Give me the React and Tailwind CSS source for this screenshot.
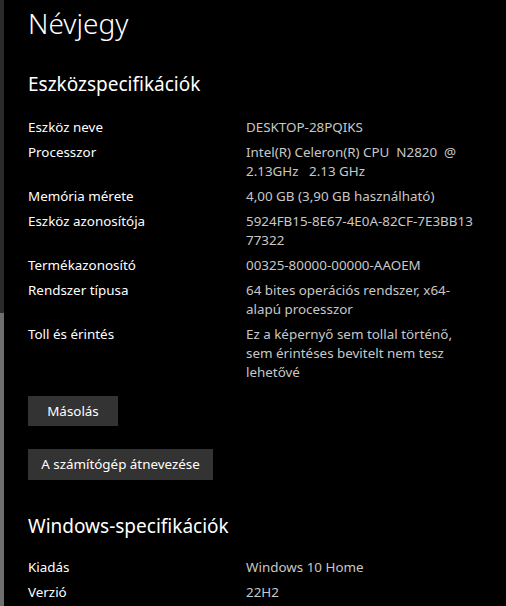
import React from 'react';

const deviceSpecs = [
  { label: 'Eszköz neve', value: ['DESKTOP-28PQIKS'] },
  { label: 'Processzor', value: ['Intel(R) Celeron(R) CPU  N2820  @', '2.13GHz   2.13 GHz'] },
  { label: 'Memória mérete', value: ['4,00 GB (3,90 GB használható)'] },
  { label: 'Eszköz azonosítója', value: ['5924FB15-8E67-4E0A-82CF-7E3BB13', '77322'] },
  { label: 'Termékazonosító', value: ['00325-80000-00000-AAOEM'] },
  { label: 'Rendszer típusa', value: ['64 bites operációs rendszer, x64-', 'alapú processzor'] },
  { label: 'Toll és érintés', value: ['Ez a képernyő sem tollal történő,', 'sem érintéses bevitelt nem tesz', 'lehetővé'] },
];

const windowsSpecs = [
  { label: 'Kiadás', value: ['Windows 10 Home'] },
  { label: 'Verzió', value: ['22H2'] },
];

const SpecRow = ({ label, value }) => (
  <div className="flex text-[13.4px] leading-[19px]">
    <div className="w-[218px] shrink-0 text-white">{label}</div>
    <div className="text-[#c8c8c8] whitespace-pre">
      {value.map((line, i) => (
        <div key={i}>{line}</div>
      ))}
    </div>
  </div>
);

const App = () => {
  return (
    <div
      className="flex h-[606px] w-[506px] overflow-hidden bg-black"
      style={{ fontFamily: '"Segoe UI", "Noto Sans", "Open Sans", sans-serif' }}
    >
      <div className="flex w-[4px] shrink-0 flex-col">
        <div className="h-[313px] bg-[#2b2b2b]" />
        <div className="flex-1 bg-[#6e6e6e]" />
      </div>

      <div className="flex flex-1 flex-col pl-[24px]">
        <h1 className="mt-[4px] text-[28px] font-light leading-[38px] text-white">Névjegy</h1>

        <h2 className="mt-[28px] text-[19px] leading-[28px] text-white">Eszközspecifikációk</h2>

        <div className="mt-[20px] flex flex-col gap-[6px]">
          {deviceSpecs.map((row) => (
            <SpecRow key={row.label} {...row} />
          ))}
        </div>

        <button className="mt-[14px] h-[30px] w-[90px] bg-[#333333] text-[13.4px] text-white">
          Másolás
        </button>
        <button className="mt-[23px] h-[31px] w-[185px] bg-[#333333] text-[13.4px] text-white">
          A számítógép átnevezése
        </button>

        <h2 className="mt-[32px] text-[19px] leading-[28px] text-white">Windows-specifikációk</h2>

        <div className="mt-[18px] flex flex-col gap-[6px]">
          {windowsSpecs.map((row) => (
            <SpecRow key={row.label} {...row} />
          ))}
        </div>
      </div>
    </div>
  );
};

export default App;
